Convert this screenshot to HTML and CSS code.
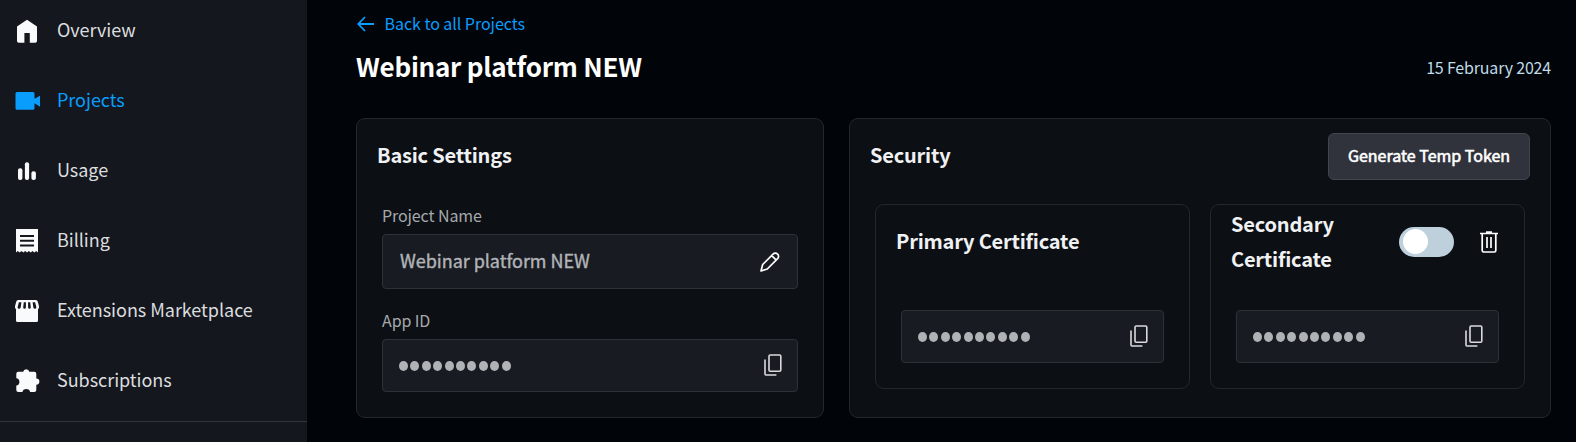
FILE: index.html
```
<!DOCTYPE html>
<html lang="en">
<head>
<meta charset="utf-8">
<title>Webinar platform NEW</title>
<link rel="stylesheet" href="styles.css">
</head>
<body>
<svg class="defs" width="0" height="0">
  <symbol id="copy" viewBox="0 0 18 22"><rect x="5" y="1" width="11.8" height="16.2" rx="1.2"/><path d="M1 5.6V20q0 1 1 1H12.4"/></symbol>
</svg>
<nav class="sidebar">
  <a class="nav-item"><svg class="nav-icon" viewBox="0 0 26 26"><path d="M13 1.700 23 8.600V23a1.800 1.800 0 0 1-1.800 1.800H15.800V15h-5.400v9.800H4.800A1.800 1.800 0 0 1 3 23V8.600z"/></svg><span>Overview</span></a>
  <a class="nav-item active"><svg class="nav-icon" viewBox="0 0 26 26"><path d="M3 4h16a1.500 1.500 0 0 1 1.500 1.500v5.300L26 7.800v11l-5.500-3.500v5a1.500 1.500 0 0 1-1.500 1.500H3a1.500 1.500 0 0 1-1.500-1.500V5.500A1.500 1.500 0 0 1 3 4z"/></svg><span>Projects</span></a>
  <a class="nav-item"><svg class="nav-icon" viewBox="0 0 26 26"><rect x="4" y="10.200" width="4.400" height="11.800" rx="2"/><rect x="10.900" y="4.300" width="4.200" height="17.700" rx="2"/><rect x="17.400" y="13.300" width="4.500" height="8.700" rx="2"/></svg><span>Usage</span></a>
  <a class="nav-item"><svg class="nav-icon" viewBox="0 0 26 26"><path fill-rule="evenodd" d="M2 1h22v23.500l-1.800-1.400-1.900 1.400-1.800-1.400-1.800 1.400-1.900-1.400-1.800 1.400-1.800-1.400-1.900 1.400-1.800-1.400-1.800 1.400-1.900-1.400L2 24.500zM6 7v2h14V7zm0 4.800v2h14v-2zm0 4.700v2h14v-2z"/></svg><span>Billing</span></a>
  <a class="nav-item"><svg class="nav-icon" viewBox="0 0 26 26"><path fill-rule="evenodd" d="M4.200 2h17.600a2 2 0 0 1 1.900 1.500L25 8.200a3.300 3.300 0 0 1-1 3V22.500a1.500 1.500 0 0 1-1.500 1.500h-19A1.500 1.500 0 0 1 2 22.500V11.200a3.300 3.300 0 0 1-1-3l1.300-4.700A2 2 0 0 1 4.200 2zM4.900 4.300 3.600 9.200q.3 1.800 1.700 1.500 1.200-.2 1.400-1.500l.7-4.900zM9.800 4.300 9.200 9.200q.1 1.500 1.300 1.500t1.400-1.500V4.300zM14.100 4.300v4.900q.2 1.500 1.400 1.500t1.300-1.500l-.6-4.900zM18.600 4.300l.7 4.900q.2 1.300 1.400 1.500 1.400.3 1.700-1.500l-1.300-4.900z"/></svg><span>Extensions Marketplace</span></a>
  <a class="nav-item"><svg class="nav-icon" viewBox="0 0 26 26"><path d="M4.300 3.800h4.900a3.100 3.100 0 0 1 6.100 0h5a2 2 0 0 1 2 2v4.700a3.100 3.100 0 0 1 0 6.200v5.300a2 2 0 0 1-2 2h-4.200c0-4-7.600-4-7.600 0H4.300a2 2 0 0 1-2-2v-4.400c4.200 0 4.200-7.400 0-7.400V5.800a2 2 0 0 1 2-2z"/></svg><span>Subscriptions</span></a>
  <div class="nav-footer"></div>
</nav>
<main class="main">
  <a class="back"><svg class="back-icon" viewBox="0 0 18 16"><path d="M17 8H1.500M8 1 1.300 8 8 15"/></svg><span>Back to all Projects</span></a>
  <header class="page-head"><h1 class="page-title">Webinar platform NEW</h1><span class="date">15 February 2024</span></header>
  <div class="cards">
    <section class="card">
      <div class="card-head"><h2 class="heading">Basic Settings</h2></div>
      <div class="settings">
        <label class="label">Project Name</label>
        <div class="field name-field"><span class="name-value">Webinar platform NEW</span><svg class="edit-icon" viewBox="0 0 20 20"><path d="M1 19 2.700 12.500 13 2.200a3.100 3.100 0 0 1 4.600 0 3.100 3.100 0 0 1 0 4.500L7.300 17zM11.700 3.600l4.600 4.600"/></svg></div>
        <label class="label">App ID</label>
        <div class="field"><span class="dots"><i></i><i></i><i></i><i></i><i></i><i></i><i></i><i></i><i></i><i></i></span><svg class="copy-icon"><use href="#copy"/></svg></div>
      </div>
    </section>
    <section class="card">
      <div class="card-head"><h2 class="heading">Security</h2><button class="button">Generate Temp Token</button></div>
      <div class="certs">
        <article class="cert">
          <div class="card-head"><h3 class="heading">Primary Certificate</h3></div>
          <div class="field"><span class="dots"><i></i><i></i><i></i><i></i><i></i><i></i><i></i><i></i><i></i><i></i></span><svg class="copy-icon"><use href="#copy"/></svg></div>
        </article>
        <article class="cert">
          <div class="card-head"><h3 class="heading">Secondary<br>Certificate</h3>
            <div class="actions"><span class="toggle"><span class="knob"></span></span><svg class="trash-icon" viewBox="0 0 18 22"><path d="M0 2.500H18M6 1h6M2.200 3v16.500q0 1.500 1.500 1.500h10.600q1.500 0 1.500-1.500V3M7 6v11M11 6v11"/></svg></div>
          </div>
          <div class="field"><span class="dots"><i></i><i></i><i></i><i></i><i></i><i></i><i></i><i></i><i></i><i></i></span><svg class="copy-icon"><use href="#copy"/></svg></div>
        </article>
      </div>
    </section>
  </div>
</main>
</body>
</html>
```
FILE: styles.css
```
* { box-sizing: border-box; }
body {
  margin: 0;
  height: 442px;
  overflow: hidden;
  display: grid;
  grid-template-columns: 307px 1fr;
  background: #010409;
  color: #f0f1f3;
  font-family: "Noto Sans CJK SC", "Noto Sans", sans-serif;
}
.defs { display: none; }
svg { flex: none; }
h1, h2, h3 { margin: 0; }

.sidebar { height: 442px; background: #14171e; overflow: hidden; }
.nav-item {
  height: 70px;
  padding-left: 14px;
  display: flex;
  align-items: center;
  gap: 17px;
  font-size: 18px;
  line-height: 28px;
  letter-spacing: -0.04px;
  color: #dcdddf;
  white-space: nowrap;
}
.nav-item span { padding-bottom: 4px; }
.nav-item:first-child { margin-top: -4px; }
.nav-icon { width: 26px; height: 26px; fill: #f9fafc; }
.active { color: #099dfd; }
.active .nav-icon { fill: #099dfd; }
.nav-footer { margin-top: 5px; border-top: 1px solid #30343b; }

.main { padding: 10px 25px 0 49px; }
.back {
  height: 28px;
  display: flex;
  align-items: center;
  gap: 9.500px;
  font-size: 16px;
  line-height: 28px;
  letter-spacing: -0.04px;
  color: #099dfd;
}
.back span { padding-bottom: 2px; }
.back-icon { width: 18px; height: 16px; margin-left: 1px; fill: none; stroke: #099dfd; stroke-width: 1.800; }
.page-head { height: 80px; display: flex; justify-content: space-between; }
.page-title { font-size: 26px; line-height: 56px; font-weight: 700; letter-spacing: -0.25px; color: #fff; white-space: nowrap; }
.date { font-size: 16px; line-height: 58px; letter-spacing: -0.180px; color: #bfdbe7; }

.cards { display: grid; grid-template-columns: 468px 702px; gap: 25px; height: 300px; }
.card, .cert { border: 1px solid #24282e; border-radius: 9px; background: #0c0f14; }
.card-head {
  height: 75px;
  padding: 0 20px;
  display: flex;
  align-items: center;
  justify-content: space-between;
}
.heading { padding-bottom: 4px; font-size: 20px; line-height: 35px; font-weight: 700; letter-spacing: -0.200px; color: #f0f1f3; white-space: nowrap; }
.settings { padding: 7px 25px 0; }
.label { display: block; height: 33px; font-size: 16px; line-height: 28px; letter-spacing: -0.100px; color: #a6a9ac; }
.field {
  height: 53px;
  display: flex;
  align-items: center;
  justify-content: space-between;
  padding: 0 15px 0 16px;
  border: 1px solid #2e3238;
  border-radius: 4px;
  background: #181b22;
}
.name-field { height: 55px; margin-bottom: 17px; padding: 0 17px; }
.name-value { padding-bottom: 4px; font-size: 18px; line-height: 28px; letter-spacing: -0.040px; color: #b1b4b7; -webkit-text-stroke: 0.400px #b1b4b7; }
.edit-icon { width: 20px; height: 20px; fill: none; stroke: #fff; stroke-width: 1.700; stroke-linejoin: round; }
.copy-icon { width: 18px; height: 22px; margin-bottom: 1px; fill: none; stroke: #d9dadc; stroke-width: 1.600; }
.dots { display: flex; gap: 2.400px; }
.dots i { width: 9px; height: 10px; border-radius: 50%; background: #b0b3b5; }
.button {
  width: 202px;
  height: 47px;
  padding: 0 0 3px;
  border: 1px solid #41454d;
  border-radius: 6px;
  background: #30333c;
  color: #fff;
  font: 400 16px/28px "Noto Sans CJK SC", sans-serif;
  -webkit-text-stroke: 0.600px #fff;
}
.certs { display: grid; grid-template-columns: 315px 315px; gap: 20px; padding: 10px 25px 0; }
.cert { height: 185px; }
.cert .field { margin: 30px 25px 0; }
.actions { display: flex; align-items: center; gap: 26px; margin-right: 6px; padding-bottom: 2px; }
.toggle { width: 55px; height: 30px; padding: 0 4px; display: flex; align-items: center; border-radius: 15px; background: #bdd0dc; }
.knob { width: 25px; height: 25px; border-radius: 50%; background: #fff; }
.trash-icon { width: 18px; height: 22px; fill: none; stroke: #fff; stroke-width: 1.700; }
```
